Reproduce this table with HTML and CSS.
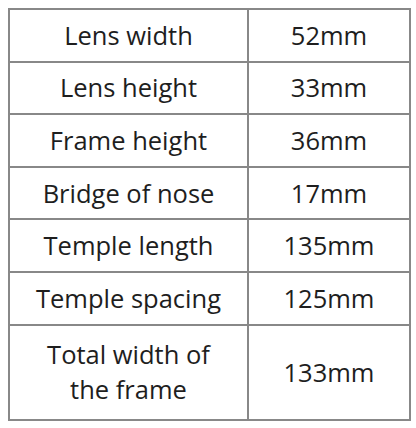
FILE: index.html
```html
<!DOCTYPE html>
<html>
<head>
<meta charset="utf-8">
<link rel="stylesheet" href="styles.css">
</head>
<body>
<table class="spec">
<tr><td class="k">Lens width</td><td class="v">52mm</td></tr>
<tr><td class="k">Lens height</td><td class="v">33mm</td></tr>
<tr><td class="k">Frame height</td><td class="v">36mm</td></tr>
<tr><td class="k">Bridge of nose</td><td class="v">17mm</td></tr>
<tr><td class="k">Temple length</td><td class="v">135mm</td></tr>
<tr><td class="k">Temple spacing</td><td class="v">125mm</td></tr>
<tr class="tall"><td class="k">Total width of<br>the frame</td><td class="v">133mm</td></tr>
</table>
</body>
</html>
```
FILE: styles.css
```css
html, body { margin: 0; padding: 0; background: #fff; }
body { padding: 8px 0 0 8px; }
.spec {
  border-collapse: collapse;
  font-family: "Open Sans", "Noto Sans", sans-serif;
  font-size: 25.5px;
  color: #1e1e1e;
  table-layout: fixed;
  width: 399px;
}
.spec tr { height: 52.6px; }
.spec td {
  border: 2px solid #888;
  text-align: center;
  padding: 0;
  line-height: 35px;
}
.spec .k { width: 237px; }
.spec .v { width: 160px; }
.spec tr.tall { height: 95px; }
```
